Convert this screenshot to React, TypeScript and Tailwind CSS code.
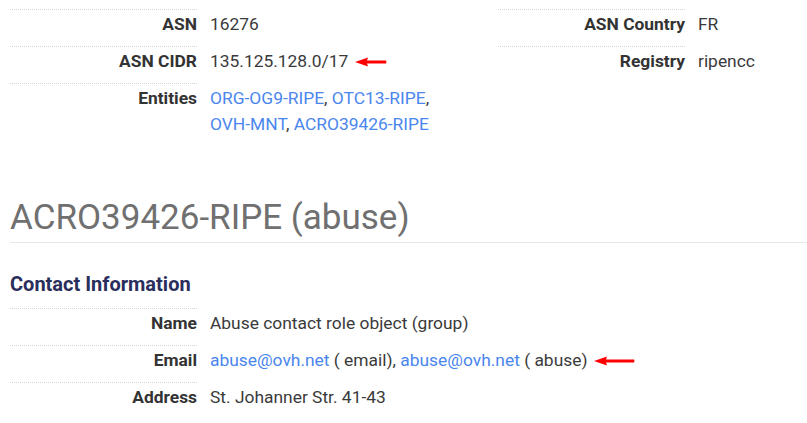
function Arrow({ w = 32 }: { w?: number }) {
  return (
    <svg width={w} height="10" viewBox={`0 0 ${w} 10`} className="inline-block ml-[7px] align-middle">
      <path d={`M0 5 L13 0.5 L12 3.6 L${w - 1} 3.6 Q${w} 5 ${w - 1} 6.4 L12 6.4 L13 9.5 Z`} fill="#ff0000" />
    </svg>
  );
}

function Row({ label, children }: { label: string; children: React.ReactNode }) {
  return (
    <div className="flex">
      <div className="w-[187px] shrink-0 border-t border-dotted border-[#d6d6d6] pt-[1px] pb-[9px] text-right font-bold text-[#333]">
        {label}
      </div>
      <div className="ml-[13px] pt-[2px] text-[#3a3a3a]">{children}</div>
    </div>
  );
}

const link = "text-[#4a86ee] whitespace-nowrap";

export default function App() {
  return (
    <div className="w-[807px] h-[423px] overflow-hidden bg-white px-[10px] pt-[9px] text-[17.4px] leading-[26px] font-['Roboto',sans-serif]">
      <div className="flex">
        <div className="w-[473px] shrink-0">
          <Row label="ASN">16276</Row>
          <Row label="ASN CIDR">
            135.125.128.0/17
            <Arrow />
          </Row>
          <Row label="Entities">
            <span className={link}>ORG-OG9-RIPE</span>, <span className={link}>OTC13-RIPE</span>,{" "}
            <span className={link}>OVH-MNT</span>, <span className={link}>ACRO39426-RIPE</span>
          </Row>
        </div>
        <div className="ml-[15px] flex-1">
          <Row label="ASN Country">FR</Row>
          <Row label="Registry">ripencc</Row>
        </div>
      </div>

      <h1 className="mt-[59px] border-b border-[#e8e8e8] pb-[2px] text-[35px] leading-[44px] font-normal text-[#707070] mr-[-10px]">
        ACRO39426-RIPE (abuse)
      </h1>

      <h3 className="mt-[28px] text-[20px] leading-[26px] font-bold text-[#2a2e5c]">Contact Information</h3>

      <div className="mt-[11px]">
        <Row label="Name">Abuse contact role object (group)</Row>
        <Row label="Email">
          <span className={link}>abuse@ovh.net</span> ( email), <span className={link}>abuse@ovh.net</span> ( abuse)
          <Arrow w={41} />
        </Row>
        <Row label="Address">St. Johanner Str. 41-43</Row>
      </div>
    </div>
  );
}
